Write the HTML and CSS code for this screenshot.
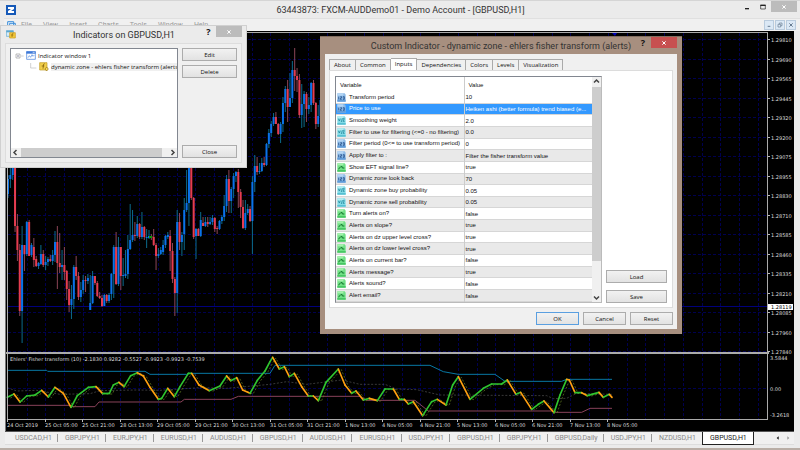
FILE: index.html
```html
<!DOCTYPE html>
<html lang="en">
<head>
    <meta charset="UTF-8">
    <meta name="viewport" content="width=device-width, initial-scale=1.0">
    <title>63443873: FXCM-AUDDemo01 - Demo Account - [GBPUSD,H1]</title>
    <link rel="stylesheet" href="styles.css">
</head>
<body>
    <svg class="defs" aria-hidden="true">
        <symbol id="icon-int" viewBox="0 0 27 27">
            <path d="M1 1h22l3 4v21H1z" fill="#8dbbe8"/>
            <path d="M1 1h18v7H1z" fill="#b5d6f5"/>
            <path d="M1 20h25v6H1z" fill="#5f9bd8"/>
            <path d="M5 11v8M10 11h4v4h-4v4h4M18 11h4v8h-4M18 15h4" fill="none" stroke="#153f7c" stroke-width="2"/>
        </symbol>
        <symbol id="icon-val" viewBox="0 0 27 27">
            <path d="M1 1h22l3 4v21H1z" fill="#83dbe6"/>
            <path d="M1 1h18v6H1z" fill="#b4eef3"/>
            <path d="M1 21h25v5H1z" fill="#56c0d3"/>
            <path d="M4 8l3 7 3-7M13 18l3-11M17 8h5l-4 8h5" fill="none" stroke="#187f96" stroke-width="2"/>
        </symbol>
        <symbol id="icon-bool" viewBox="0 0 27 27">
            <path d="M1 1h22l3 4v21H1z" fill="#6fe085"/>
            <path d="M1 1h18v6H1z" fill="#a6f0ae"/>
            <path d="M1 21h25v5H1z" fill="#48c765"/>
            <path d="M4 18l5-4 5-5 2 6h6" fill="none" stroke="#11742b" stroke-width="3"/>
        </symbol>
    </svg>

    <div class="terminal">
        <header class="titlebar">
            <svg class="logo" viewBox="0 0 30 30"><path d="M0 0h30v30H0z" fill="#1559b8"/><path d="M6 6h18v6l-9 6h9v6H6v-6l9-6H6z" fill="#fff"/></svg>
            <h1>63443873: FXCM-AUDDemo01 - Demo Account - [GBPUSD,H1]</h1>
            <div class="window-buttons">
                <button aria-label="Minimize"><svg viewBox="0 0 18 18"><path d="M3 14h12" stroke="#222" stroke-width="4"/></svg></button>
                <button aria-label="Maximize"><svg viewBox="0 0 18 18"><path d="M2 4h14v11H2z" fill="none" stroke="#222" stroke-width="2"/><path d="M1 4h16" stroke="#222" stroke-width="4"/></svg></button>
                <button class="close" aria-label="Close"><svg viewBox="0 0 18 18"><path d="M4 4l10 10M14 4L4 14" stroke="#fff" stroke-width="3"/></svg></button>
            </div>
        </header>

        <nav class="menubar">
            <svg class="menu-icon" viewBox="0 0 27 24"><path d="M2 2h18v14H2zM8 7h17v14H8z" fill="#e4f1fd" stroke="#3e8ed8" stroke-width="3"/><path d="M10 15l5-3 4 4 4-4" fill="none" stroke="#3e8ed8" stroke-width="2"/></svg>
            <a href="#">File</a><a href="#">View</a><a href="#">Insert</a><a href="#">Charts</a><a href="#">Tools</a><a href="#">Window</a><a href="#">Help</a>
            <div class="mdi-buttons">
                <button aria-label="Minimize chart"><svg viewBox="0 0 18 18"><path d="M5 13h8" stroke="#667b91" stroke-width="3"/></svg></button>
                <button aria-label="Restore chart"><svg viewBox="0 0 18 18"><path d="M3 7h8v8H3zM7 7V3h8v8h-4" fill="none" stroke="#667b91" stroke-width="2"/></svg></button>
                <button aria-label="Close chart"><svg viewBox="0 0 18 18"><path d="M4 4l10 10M14 4L4 14" stroke="#667b91" stroke-width="3"/></svg></button>
            </div>
        </nav>

        <main class="chart-window">
            <svg id="chart" class="chart" viewBox="6 31 788 400"></svg>
        </main>

        <nav class="chart-tabs">
            <a href="#">USDCAD,H1</a><a href="#">GBPJPY,H1</a><a href="#">EURJPY,H1</a><a href="#">EURUSD,H1</a><a href="#">AUDUSD,H1</a><a href="#">GBPUSD,H1</a><a href="#">AUDUSD,H1</a><a href="#">EURUSD,H1</a><a href="#">USDJPY,H1</a><a href="#">GBPUSD,H1</a><a href="#">GBPJPY,H1</a><a href="#">GBPUSD,Daily</a><a href="#">USDJPY,H1</a><a href="#">NZDUSD,H1</a><a href="#" class="active">GBPUSD,H1</a>
            <div class="tab-arrows">
                <button aria-label="Scroll left"><svg viewBox="0 0 9 12"><path d="M8 1v10L2 6z" fill="#111"/></svg></button>
                <button aria-label="Scroll right"><svg viewBox="0 0 9 12"><path d="M1 1v10l6-5z" fill="#999"/></svg></button>
            </div>
        </nav>
    </div>

    <section class="dialog indicators">
        <header class="dialog-title">
            <svg class="dialog-icon" viewBox="0 0 30 27"><path d="M1 2h21v17H1z" fill="#d8ecf8" stroke="#5ba6cf" stroke-width="2"/><path d="M1 2h21v5H1z" fill="#5ba6cf"/><path d="M11 8h17v16H11z" fill="#f2c83c" stroke="#c99a1c" stroke-width="2"/><path d="M22 10c-4 0-3 4-4 11M15 15h7" fill="none" stroke="#8b6204" stroke-width="2"/></svg>
            <h2>Indicators on GBPUSD,H1</h2>
            <button class="help" aria-label="Help">?</button>
            <button class="close" aria-label="Close"><svg viewBox="0 0 18 18"><path d="M4 4l10 10M14 4L4 14" stroke="currentColor" stroke-width="3"/></svg></button>
        </header>
        <div class="indicators-body">
            <div class="tree">
                <ul>
                    <li>
                        <svg class="branch" viewBox="0 0 27 24"><path d="M3 6h12v12H3z" fill="#fff" stroke="#999" stroke-width="2"/><path d="M6 12h6" stroke="#446" stroke-width="2"/><path d="M17 12h9" stroke="#bbb" stroke-width="2"/></svg>
                        <svg class="node-icon" viewBox="0 0 30 27"><path d="M2 2h26v23H2z" fill="#fff" stroke="#3d79d8" stroke-width="2"/><path d="M1 1h28v7H1z" fill="#3d79d8"/><path d="M20 4h6" stroke="#fff" stroke-width="2"/><path d="M6 20l4-6 4 5 4-8 3 5 4-4" fill="none" stroke="#4a85dd" stroke-width="2"/></svg>
                        <span>Indicator window 1</span>
                    </li>
                    <li class="child">
                        <svg class="branch" viewBox="0 0 27 24"><path d="M8 0v15h17" fill="none" stroke="#bbb" stroke-width="2"/></svg>
                        <svg class="node-icon" viewBox="0 0 30 27"><path d="M2 2h22v22H2z" fill="#f2cf4a" stroke="#c09a22" stroke-width="2"/><path d="M17 5c-5 0-3 5-5 15M8 12h8" fill="none" stroke="#6b4c00" stroke-width="2"/><path d="M23 15l5 6-5 6-5-6z" fill="#f7dc62" stroke="#927010" stroke-width="2"/></svg>
                        <span class="selected">dynamic zone - ehlers fisher transform (alerts)</span>
                    </li>
                </ul>
                <div class="hscroll">
                    <svg viewBox="0 0 18 18"><path d="M11 4L6 9l5 5" fill="none" stroke="#444" stroke-width="3"/></svg>
                    <div class="thumb"></div>
                    <svg viewBox="0 0 18 18"><path d="M7 4l5 5-5 5" fill="none" stroke="#444" stroke-width="3"/></svg>
                </div>
            </div>
            <div class="side-buttons">
                <button class="btn">Edit</button>
                <button class="btn">Delete</button>
                <button class="btn last">Close</button>
            </div>
        </div>
    </section>

    <section class="dialog custom">
        <header class="dialog-title">
            <h2>Custom Indicator - dynamic zone - ehlers fisher transform (alerts)</h2>
            <button class="help" aria-label="Help">?</button>
            <button class="close" aria-label="Close"><svg viewBox="0 0 18 18"><path d="M4 4l10 10M14 4L4 14" stroke="currentColor" stroke-width="3"/></svg></button>
        </header>
        <div class="custom-body">
            <div class="tabs" role="tablist">
                <button role="tab">About</button>
                <button role="tab">Common</button>
                <button role="tab" class="active">Inputs</button>
                <button role="tab">Dependencies</button>
                <button role="tab">Colors</button>
                <button role="tab">Levels</button>
                <button role="tab">Visualization</button>
            </div>
            <div class="pane">
                <div class="list">
                    <table>
                        <thead>
                            <tr><th>Variable</th><th>Value</th></tr>
                        </thead>
                        <tbody>
                            <tr><td><svg><use href="#icon-int"/></svg>Transform period</td><td>10</td></tr>
                            <tr class="selected"><td><svg><use href="#icon-int"/></svg>Price to use</td><td>Heiken ashi (better formula) trend biased (e...</td></tr>
                            <tr><td><svg><use href="#icon-val"/></svg>Smoothing weight</td><td>2.0</td></tr>
                            <tr><td><svg><use href="#icon-val"/></svg>Filter to use for filtering (&lt;=0 - no filtering)</td><td>0.0</td></tr>
                            <tr><td><svg><use href="#icon-int"/></svg>Filter period (0&lt;= to use transform period)</td><td>0</td></tr>
                            <tr><td><svg><use href="#icon-int"/></svg>Apply filter to :</td><td>Filter the fisher transform value</td></tr>
                            <tr><td><svg><use href="#icon-bool"/></svg>Show EFT signal line?</td><td>true</td></tr>
                            <tr><td><svg><use href="#icon-int"/></svg>Dynamic zone look back</td><td>70</td></tr>
                            <tr><td><svg><use href="#icon-val"/></svg>Dynamic zone buy probability</td><td>0.05</td></tr>
                            <tr><td><svg><use href="#icon-val"/></svg>Dynamic zone sell probability</td><td>0.05</td></tr>
                            <tr><td><svg><use href="#icon-bool"/></svg>Turn alerts on?</td><td>false</td></tr>
                            <tr><td><svg><use href="#icon-bool"/></svg>Alerts on slope?</td><td>true</td></tr>
                            <tr><td><svg><use href="#icon-bool"/></svg>Alerts on dz upper level cross?</td><td>true</td></tr>
                            <tr><td><svg><use href="#icon-bool"/></svg>Alerts on dz lower level cross?</td><td>true</td></tr>
                            <tr><td><svg><use href="#icon-bool"/></svg>Alerts on current bar?</td><td>false</td></tr>
                            <tr><td><svg><use href="#icon-bool"/></svg>Alerts message?</td><td>true</td></tr>
                            <tr><td><svg><use href="#icon-bool"/></svg>Alerts sound?</td><td>false</td></tr>
                            <tr><td><svg><use href="#icon-bool"/></svg>Alert email?</td><td>false</td></tr>
                        </tbody>
                    </table>
                    <div class="vscroll">
                        <svg viewBox="0 0 18 18"><path d="M4 11l5-5 5 5" fill="none" stroke="#444" stroke-width="3"/></svg>
                        <div class="thumb"></div>
                        <svg viewBox="0 0 18 18"><path d="M4 7l5 5 5-5" fill="none" stroke="#444" stroke-width="3"/></svg>
                    </div>
                </div>
                <div class="pane-buttons">
                    <button class="btn">Load</button>
                    <button class="btn">Save</button>
                </div>
            </div>
            <footer class="dialog-buttons">
                <button class="btn default">OK</button>
                <button class="btn">Cancel</button>
                <button class="btn">Reset</button>
            </footer>
        </div>
    </section>

    <script src="chart.js"></script>
</body>
</html>
```

FILE: styles.css
```css
* {
    box-sizing: border-box;
}
body {
    margin: 0;
    font-family: "Open Sans", sans-serif;
    font-size: 6px;
    color: #111;
    background: #ebebeb;
}
h1, h2 {
    margin: 0;
    font-family: Roboto, sans-serif;
    font-weight: normal;
    font-size: 9px;
    color: #333;
}
button {
    font: inherit;
    color: inherit;
    margin: 0;
    padding: 0;
    border: none;
    background: none;
}
a {
    color: inherit;
    text-decoration: none;
}
svg {
    display: block;
}
.defs {
    position: absolute;
    width: 0;
    height: 0;
}

/* main window */
.terminal {
    display: flex;
    flex-direction: column;
    min-height: 100vh;
    border-bottom: 2px solid #b9aea6;
}
.titlebar {
    display: flex;
    align-items: center;
    height: 18px;
    padding-left: 6px;
    border-top: 1px solid #d5d5d5;
}
.logo {
    width: 10px;
    height: 10px;
}
.titlebar h1 {
    flex: 1;
    text-align: center;
    padding-left: 46px;
}
.window-buttons {
    display: flex;
    align-self: flex-start;
    margin-right: 3px;
}
.window-buttons button {
    display: grid;
    place-items: center;
    width: 16px;
    height: 11px;
}
.window-buttons svg {
    width: 6px;
    height: 6px;
}
.window-buttons .close {
    width: 26px;
    background: #bcbcbc;
}
.menubar {
    display: flex;
    align-items: center;
    gap: 11px;
    height: 13px;
    margin-left: 4px;
    padding: 0 4px 0 3px;
    font-family: Roboto, sans-serif;
    font-size: 7px;
    color: #999;
    background: #f0f0f0;
    border-top: 1px solid #e0e0e0;
}
.menu-icon {
    width: 9px;
    height: 8px;
    margin-right: -6px;
}
.mdi-buttons {
    display: flex;
    gap: 1px;
    margin-left: auto;
}
.mdi-buttons button {
    display: grid;
    place-items: center;
    width: 10px;
    height: 10px;
    background: #dbe8f5;
    border: 1px solid #b9cbdd;
}
.mdi-buttons svg {
    width: 6px;
    height: 6px;
}
.chart-window {
    margin: 0 6px 0 5px;
    background: #000;
    border-left: 1px solid #777;
}
.chart {
    width: 100%;
}
.chart text {
    font-family: "DejaVu Sans", sans-serif;
    font-size: 5px;
    fill: #ddd;
}
.chart-tabs {
    display: flex;
    align-items: flex-start;
    height: 14px;
    margin: 0 6px 0 5px;
    color: #888;
    background: #f0f0f0;
    border-top: 1px solid #555;
    border-bottom: 1px solid #ddd;
    font-family: Roboto, sans-serif;
    font-size: 7px;
    line-height: 12px;
    padding-left: 3px;
}
.chart-tabs a {
    padding: 0 6px 0 7px;
    background: linear-gradient(#999, #999) right 2px / 1px 8px no-repeat;
}
.chart-tabs a:nth-last-of-type(2) {
    background: none;
}
.chart-tabs .active {
    color: #222;
    background: #fff;
    border: 1px solid #222;
    border-top: none;
}
.tab-arrows {
    display: flex;
    gap: 8px;
    margin-left: auto;
    padding: 4px 4px 0 0;
}
.tab-arrows svg {
    width: 3px;
    height: 4px;
}

/* dialogs */
.dialog {
    position: absolute;
    background: #ebebeb;
}
.dialog-title {
    display: flex;
    align-items: center;
    height: 17px;
}
.dialog-title h2 {
    flex: 1;
    text-align: center;
}
.dialog-title button {
    align-self: flex-start;
    height: 11px;
}
.dialog-title .help {
    width: 15px;
    font-size: 9px;
    font-weight: bold;
    line-height: 11px;
}
.dialog-title .close {
    display: grid;
    place-items: center;
    width: 26px;
    color: #fff;
    background: #bcbcbc;
}
.dialog-title svg {
    width: 6px;
    height: 6px;
}
.dialog-title .dialog-icon {
    width: 10px;
    height: 9px;
}
.btn {
    height: 13px;
    line-height: 10px;
    background: linear-gradient(#f2f2f2, #e2e2e2);
    border: 1px solid #acacac;
}
.btn.default {
    border-color: #5a9fe0;
}

.indicators {
    left: 0;
    top: 25px;
    width: 247px;
    height: 143px;
    padding: 0 4px 4px;
    border: 1px solid #d0d0d0;
}
.indicators .dialog-title {
    padding-left: 1px;
}
.indicators .dialog-title h2 {
    padding-left: 31px;
}
.indicators-body {
    display: flex;
    gap: 4px;
    height: 120px;
    padding: 4px;
    background: #f0f0f0;
    border: 1px solid #ddd;
}
.tree {
    display: flex;
    flex-direction: column;
    flex: 1;
    min-width: 0;
    background: #fff;
    border: 1px solid #828790;
}
.tree ul {
    flex: 1;
    margin: 0;
    padding: 1px 0 0 4px;
    list-style: none;
    overflow: hidden;
}
.tree li {
    display: flex;
    align-items: center;
    gap: 2px;
    height: 11px;
    white-space: nowrap;
}
.tree .child {
    padding-left: 13px;
}
.tree li svg {
    flex: none;
}
.branch {
    width: 9px;
    height: 8px;
}
.node-icon {
    width: 10px;
    height: 9px;
}
.tree .selected {
    background: #f0f0f0;
}
.hscroll, .vscroll {
    display: flex;
    background: #f0f0f0;
}
.hscroll {
    height: 9px;
}
.hscroll svg, .vscroll svg {
    width: 9px;
    height: 9px;
}
.thumb {
    background: #cdcdcd;
}
.hscroll .thumb {
    width: 141px;
    margin: 0 auto 0 1px;
}
.side-buttons {
    display: flex;
    flex-direction: column;
    gap: 4px;
    width: 55px;
}
.side-buttons .last {
    margin-top: auto;
}

.custom {
    left: 320px;
    top: 36px;
    width: 362px;
    padding: 0 5px 5px;
    background: #a78f7f;
    border-top: 1px solid #806c5f;
}
.custom .help {
    width: 16px;
}
.custom .dialog-title h2 {
    padding-left: 42px;
}
.custom .close {
    background: #c75050;
}
.custom-body {
    padding: 4px;
    background: #f0f0f0;
}
.tabs {
    display: flex;
    align-items: flex-end;
}
.tabs button {
    height: 11px;
    padding: 0 4px;
    line-height: 9px;
    border: 1px solid #aaa;
    border-width: 1px 1px 0 0;
}
.tabs button:first-child {
    border-left-width: 1px;
}
.tabs .active {
    height: 12px;
    background: #fff;
}
.pane {
    display: flex;
    justify-content: space-between;
    padding: 5px 5px 4px;
    background: #fff;
    border: 1px solid #dcdcdc;
}
.list {
    display: flex;
    border: 1px solid #828790;
    border-right-color: #bbb;
    border-bottom-color: #bbb;
}
.list table {
    width: 256px;
    height: 225px;
    table-layout: fixed;
    border-collapse: collapse;
    font-family: "Liberation Sans", Arial, sans-serif;
    line-height: 8px;
}
.list th, .list td {
    padding: 0 2px 0 1px;
    text-align: left;
    font-weight: normal;
    white-space: nowrap;
    overflow: hidden;
}
.list th {
    height: 15px;
    padding-left: 4px;
}
.list td + td, .list th + th {
    border-left: 1px solid #ccc;
}
.list tbody tr {
    border-bottom: 1px solid #d6d6d6;
}
.list tbody tr:nth-child(even) {
    background: #e9e9e9;
}
.list tbody .selected:nth-child(even) {
    color: #fff;
    background: #3399ff;
}
.list td svg {
    display: inline-block;
    width: 9px;
    height: 9px;
    margin-right: 3px;
    vertical-align: middle;
}
.vscroll {
    flex-direction: column;
    width: 9px;
}
.vscroll .thumb {
    height: 174px;
    margin: 1px 0 auto;
}
.pane-buttons {
    display: flex;
    flex-direction: column;
    justify-content: flex-end;
    gap: 7px;
    width: 61px;
}
.dialog-buttons {
    display: flex;
    justify-content: flex-end;
    gap: 4px;
    padding-top: 4px;
}
.dialog-buttons .btn {
    width: 43px;
}
```

FILE: chart.js
```js
const chart = document.getElementById("chart");

// one row per bar: high, low, open, close
const bars = [
    [175,198,194,179],[165,188,179,175],[160,180,175,160],[160,232,160,226],[214,261,226,250],
    [244,316,250,311],[226,343,311,245],[245,271,245,254],[221,256,254,222],[220,256,222,256],
    [243,257,255,245],[238,267,247,260],[256,267,259,266],[262,269,266,263],[245,265,264,254],
    [250,267,254,265],[256,270,265,262],[257,266,262,259],[255,262,259,261],[250,265,261,255],
    [231,262,255,242],[226,289,242,263],[233,273,263,267],[250,280,267,265],[247,280,265,272],
    [270,300,271,289],[281,312,289,305],[285,319,305,299],[265,309,299,267],[256,280,267,276],
    [272,300,276,297],[282,302,297,290],[275,294,290,280],[276,292,280,281],[274,284,281,278],
    [275,310,310,303],[271,304,303,276],[276,285,276,283],[281,297,283,296],[292,299,296,298],
    [295,307,298,306],[294,306,306,295],[294,303,295,301],[293,303,301,295],[273,300,294,274],
    [245,298,274,247],[232,285,247,284],[237,286,284,247],[247,290,247,276],[258,286,276,275],
    [250,278,276,274],[235,279,274,249],[204,250,249,240],[210,242,240,235],[222,241,235,236],
    [216,238,236,224],[223,239,224,237],[212,239,237,227],[226,240,227,237],[229,248,238,237],
    [230,239,238,236],[234,240,236,238],[229,246,237,245],[243,270,245,256],[248,258,256,254],
    [247,255,254,250],[240,255,252,245],[235,248,245,236],[232,239,237,235],[230,271,236,251],
    [243,283,251,279],[277,316,279,293],[210,313,293,222],[213,250,222,242],[232,256,242,235],
    [198,250,234,210],[170,212,210,203],[160,226,203,160],[165,200,168,198],[197,239,198,237],
    [228,259,236,229],[228,236,229,236],[212,237,236,220],[217,226,223,226],[217,227,226,222],
    [217,227,222,224],[217,225,224,222],[215,225,222,218],[217,232,218,229],[226,234,228,229],
    [220,230,229,221],[215,224,221,217],[195,221,217,206],[175,212,206,179],[170,213,179,201],
    [187,213,201,189],[173,198,189,176],[171,182,176,172],[169,208,172,192],[189,218,192,207],
    [200,229,207,228],[200,230,228,213],[204,215,213,209],[206,222,209,221],[176,254,221,182],
    [155,192,182,166],[157,175,166,172],[163,174,172,171],[158,172,171,163],[157,167,163,165],
    [143,166,165,144],[129,148,144,133],[121,137,133,124],[113,126,124,117],[112,124,117,124],
    [123,135,124,134],[122,143,134,124],[97,132,124,103],[86,112,103,89],[80,122,89,107],
    [73,107,107,98],[61,103,98,70],[48,91,70,76],[68,92,76,80],[74,118,80,115],
    [84,128,115,104],[91,127,104,94],[92,122,94,109],[97,114,109,105],[82,112,105,83],
    [80,105,83,103],[102,129,103,124],[105,127,124,116],[85,120,116,100]
];

const prices = ["1.29810", "1.29690", "1.29565", "1.29445", "1.29320", "1.29200", "1.29075", "1.28955",
    "1.28830", "1.28710", "1.28585", "1.28460", "1.28335", "1.28210", "1.28085", "1.27960", "1.27840"];

const times = ["24 Oct 2019", "25 Oct 05:00", "25 Oct 21:00", "28 Oct 13:00", "29 Oct 05:00", "29 Oct 21:00",
    "30 Oct 13:00", "31 Oct 05:00", "31 Oct 21:00", "1 Nov 13:00", "4 Nov 05:00", "4 Nov 21:00", "5 Nov 13:00",
    "6 Nov 05:00", "6 Nov 21:00", "7 Nov 13:00", "8 Nov 05:00"];

// indicator panel, three units to a pixel
const fisher = [[22,157],[42,147],[60,171],[80,153],[105,150],[125,136],[145,156],[165,127],[190,145],[213,187],
    [232,152],[265,127],[288,125],[308,146],[328,145],[340,120],[357,112],[372,125],[392,92],[412,83],[430,93],
    [450,127],[475,163],[485,160],[503,130],[523,155],[540,125],[565,85],[575,85],[597,120],[628,137],[660,123],
    [680,93],[692,107],[710,98],[728,135],[750,145],[772,106],[795,78],[810,50],[818,37],[838,72],[853,65],
    [868,95],[883,85],[905,125],[925,153],[940,153],[955,167],[978,112],[1015,72],[1035,120],[1055,145],
    [1068,138],[1090,165],[1108,160],[1132,167],[1155,132],[1180,132],[1198,163],[1213,163],[1225,177],
    [1240,170],[1268,212],[1295,170],[1312,163],[1338,180],[1358,120],[1375,95],[1410,163],[1450,130],
    [1475,117],[1505,117],[1522,105],[1548,148],[1562,142],[1595,193],[1615,178],[1632,168],[1662,203],
    [1680,150],[1700,103],[1708,105],[1725,143],[1745,143],[1762,152],[1797,142],[1810,157],[1828,148],[1836,157]];
const upper = "22,76 140,76 143,79 435,79 450,88 560,88 565,85 810,85 825,61 1290,61 1330,80 1375,88 1485,88 1515,109 1685,109 1700,103 1836,103";
const lower = "22,181 210,181 214,185 285,185 297,171 543,171 553,163 693,163 715,154 1080,154 1100,166 1245,166 1285,198 1655,198 1665,202 1745,202 1770,190 1836,190";
const middle = "22,128 50,138 110,136 180,148 270,146 300,137 410,135 480,136 600,128 680,130 810,118 860,110 920,118 1025,105 1080,118 1155,118 1190,132 1250,134 1320,150 1640,152 1660,161 1700,160 1730,145 1836,148";

function line(x1, y1, x2, y2, color, extra = "") {
    return `<line x1="${x1}" y1="${y1}" x2="${x2}" y2="${y2}" stroke="${color}" ${extra}/>`;
}

function drawGrid() {
    let out = "";
    for (let x = 26.5; x < 768; x += 18.75) {
        out += line(Math.round(x) + 0.5, 33, Math.round(x) + 0.5, 419, "#000050", 'stroke-dasharray="3 2"');
    }
    prices.forEach((price, i) => {
        const y = Math.round(39 + i * 19.5) + 0.5;
        out += line(8, y, 768, y, "#000050", 'stroke-dasharray="3 2"');
        out += line(768, y, 770, y, "#bbb");
        out += `<text x="771" y="${y + 2}">${price}</text>`;
    });
    out += line(8, 388.5, 768, 388.5, "#000050", 'stroke-dasharray="3 2"');
    out += line(8, 306.5, 768, 306.5, "#00007c");
    return out;
}

function drawBars() {
    let out = "";
    bars.forEach(([high, low, open, close], i) => {
        const x = 8 + i * 2.35;
        const up = close < open;
        out += line(x, high, x, low, up ? "#0b6b8c" : "#8c4557", 'stroke-width="1"');
        const top = Math.min(open, close);
        const height = Math.max(Math.abs(open - close), 1);
        out += `<rect x="${x - 1}" y="${top}" width="2" height="${height}" fill="${up ? "#0a72ea" : "#e63c50"}"/>`;
    });
    out += '<rect x="149" y="236" width="3" height="2" fill="#0a9a0a"/>';
    return out;
}

function drawIndicator() {
    let out = '<g transform="translate(0 345) scale(0.33333)" fill="none" stroke-width="3">';
    out += `<polyline points="${upper}" stroke="#0878a4"/>`;
    out += `<polyline points="${lower}" stroke="#8a4259"/>`;
    out += `<polyline points="${middle}" stroke="#555" stroke-width="2" stroke-dasharray="6 5"/>`;
    const signal = fisher.map(([x, y]) => `${x + 9},${y + 2}`).slice(0, -3).join(" ");
    out += `<polyline points="${signal}" stroke="#6c8a22" stroke-width="2" stroke-dasharray="6 5"/>`;
    for (let i = 1; i < fisher.length; i++) {
        const [x1, y1] = fisher[i - 1];
        const [x2, y2] = fisher[i];
        out += line(x1, y1, x2, y2, y2 <= y1 ? "#2fc42f" : "#ffa010", 'stroke-width="5" stroke-linecap="round"');
    }
    return out + "</g>";
}

function drawFrame() {
    let out = '<rect x="6" y="352" width="763" height="2" fill="#aaa"/>';
    out += line(7, 32.5, 768, 32.5, "#aaa");
    out += line(7.5, 32, 7.5, 419, "#aaa");
    out += line(767.5, 32, 767.5, 420, "#aaa");
    out += line(7, 419.5, 768, 419.5, "#aaa");
    out += '<path d="M612 33h5l-2 3z" fill="#0000b4"/>';
    times.forEach((time, i) => {
        const x = Math.round(7 + i * 37.5);
        out += line(x + 0.5, 419, x + 0.5, 422, "#bbb");
        out += `<text x="${x}" y="427">${time}</text>`;
    });
    out += '<text x="10" y="361">Ehlers\' Fisher transform (10) -2.1830 0.9282 -0.5527 -0.9923 -0.9923 -0.7539</text>';
    out += '<text x="770" y="360">3.5844</text><text x="770" y="391">0.00</text><text x="770" y="417">-3.2618</text>';
    out += '<rect x="768" y="304" width="25" height="6" fill="#fff"/>';
    out += '<text x="771" y="309" style="fill: #000">1.28119</text>';
    return out;
}

chart.innerHTML = drawGrid() + drawBars() + drawIndicator() + drawFrame();
```
